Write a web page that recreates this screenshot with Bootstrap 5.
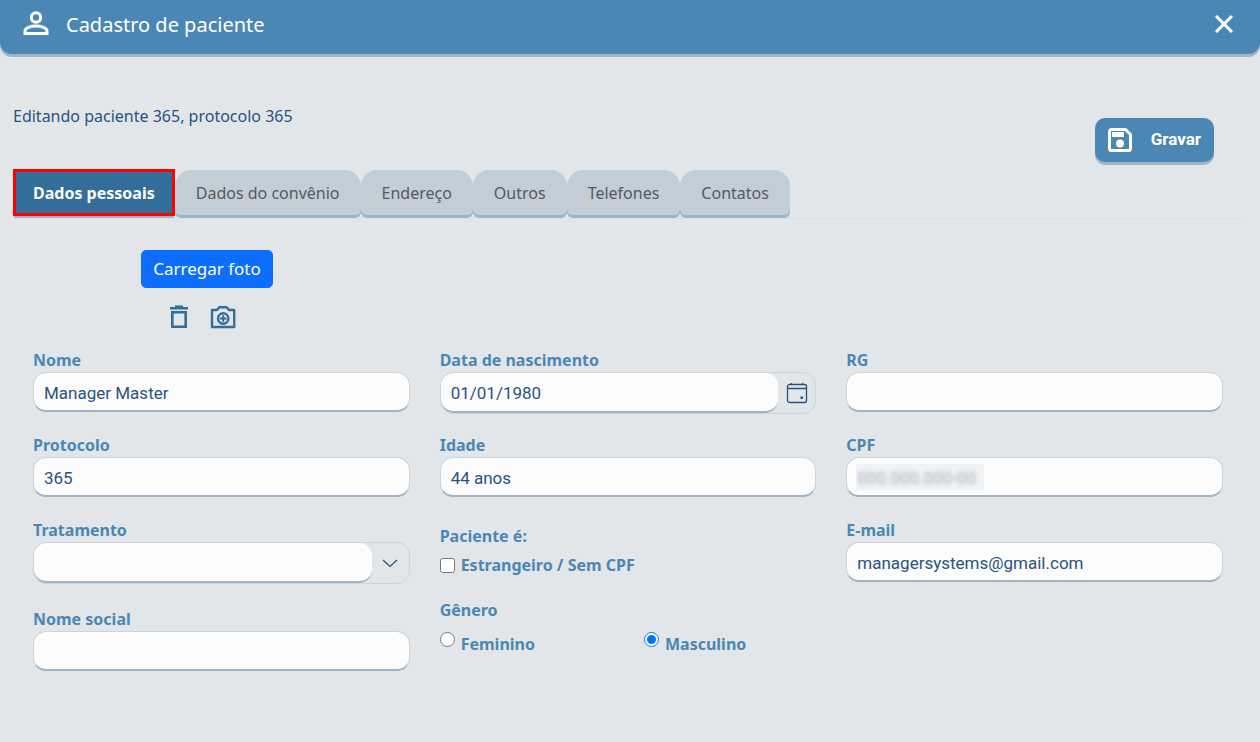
<!DOCTYPE html>
<html lang="pt-BR">
<head>
<meta charset="utf-8">
<meta name="viewport" content="width=device-width, initial-scale=1">
<title>Cadastro de paciente</title>
<link href="https://cdn.jsdelivr.net/npm/bootstrap@5.3.0/dist/css/bootstrap.min.css" rel="stylesheet">
<style>
  :root { --brand: #4a87b5; --brand-dark: #336d99; --edge: #9fb4c6; --surface: #e2e6e9; --ink: #285380; }
  body { background: var(--surface); color: var(--ink); font-family: "Noto Sans", sans-serif; font-size: 16px; }
  .topbar { background: var(--brand); color: #fff; height: 54px; padding: 0 24px 4px 22px; border-radius: 0 0 12px 12px; box-shadow: 0 3px 0 var(--edge); }
  .topbar h1 { font-size: 20px; font-weight: 400; line-height: 28px; }
  .plain-btn { background: none; border: 0; padding: 0; color: inherit; display: flex; }
  .intro { padding: 50px 46px 0 13px; }
  .save-btn { background: var(--brand); color: #fff; font-family: Roboto, sans-serif; font-weight: 700; font-size: 17px; height: 44px; border: 0; border-radius: 10px; padding: 0 13px 0 12px; gap: 18px; margin-top: 14px; box-shadow: 0 3px 0 var(--edge); }
  .tabs-row { margin: 8px 17px 0 14px; border-bottom: 1px solid #dcdfe4; padding-bottom: 3px; }
  .tabs-row .nav-link { height: 45px; padding: 0 21px; color: #555a5e; background: #c3cdd6; border: 0; border-radius: 16px 16px 6px 6px; box-shadow: 0 3px 0 var(--edge); }
  .tabs-row .nav-link.active { background: var(--brand-dark); color: #fff; font-weight: 700; padding: 0 19px; border-radius: 0; outline: 3px solid #f00; outline-offset: -2px; margin-right: 1px; }
  .form-area { padding: 31px 22px 24px 18px; }
  .photo-box { width: 378px; padding-bottom: 16px; color: var(--brand-dark); }
  .photo-box .btn { font-size: 17px; padding: 5px 11px; line-height: 26px; border-radius: 5px; --bs-btn-bg: #0d6efd; }
  .photo-tools { padding-right: 12px; }
  .form-area .row { --bs-gutter-x: 30px; margin: 0; }
  .field-label { color: var(--brand); font-weight: 700; line-height: 24px; display: block; margin: 0; }
  .tick + .field-label { padding-left: 6px; }
  .field { margin-bottom: 21px; }
  .field .form-control { height: 40px; background-color: #fcfcfc; border: 1px solid #ced4da; border-bottom: 2px solid var(--edge); border-radius: 13px; color: var(--ink); font-family: Roboto, sans-serif; font-size: 17px; padding: 2px 10px 0; }
  .field .combo { border: 1px solid #ced4da; border-radius: 13px; height: 42px; margin-bottom: -2px; }
  .field .combo .form-control { border-width: 0 0 2px; flex: 1; min-width: 0; }
  .combo .plain-btn { width: 37px; align-items: center; justify-content: center; }
  .field .masked { color: transparent; text-shadow: 0 0 4px #a3aebb; background-image: linear-gradient(#f0f2f5, #f0f2f5); background-size: 128px 26px; background-position: 9px 6px; background-repeat: no-repeat; box-shadow: none; }
  .tick { width: 15px; height: 15px; margin: 0; flex: none; }
  .choices { padding-top: 6px; }
  .choice-row { padding: 5px 0; }
  .choice-row-tall { padding-top: 10px; }
</style>
</head>
<body>
<header class="topbar d-flex align-items-center">
  <svg width="28" height="28" viewBox="0 0 28 28" fill="none" stroke="#fff" stroke-width="3" aria-hidden="true"><circle cx="14" cy="6.500" r="4.700"/><path d="M3 22.500v-2.500c0-3 5.600-5 11-5s11 2 11 5v2.500z"/></svg>
  <h1 class="mb-0 ms-3">Cadastro de paciente</h1>
  <button class="plain-btn ms-auto" type="button" aria-label="Fechar"><svg width="24" height="24" viewBox="0 0 24 24" fill="none" stroke="#fff" stroke-width="3"><path d="M4 3l16 16M20 3L4 19"/></svg></button>
</header>
<main>
  <div class="intro d-flex justify-content-between">
    <p class="mb-0 lh-base">Editando paciente 365, protocolo 365</p>
    <button class="save-btn d-flex align-items-center" type="button">
      <svg width="26" height="26" viewBox="0 0 26 26" aria-hidden="true"><path fill="none" stroke="#fff" stroke-width="3" stroke-linejoin="round" d="M4.500 2.500h14l5 5v14a2 2 0 0 1-2 2h-17a2 2 0 0 1-2-2v-17a2 2 0 0 1 2-2z"/><path fill="#fff" d="M5 5h12v5H5z"/><circle cx="13" cy="16.500" r="4" fill="#fff"/></svg>
      <span>Gravar</span>
    </button>
  </div>
  <nav class="tabs-row nav">
    <a class="nav-link active d-flex align-items-center" href="#dados" aria-current="page">Dados pessoais</a>
    <a class="nav-link d-flex align-items-center" href="#convenio">Dados do convênio</a>
    <a class="nav-link d-flex align-items-center" href="#endereco">Endereço</a>
    <a class="nav-link d-flex align-items-center" href="#outros">Outros</a>
    <a class="nav-link d-flex align-items-center" href="#telefones">Telefones</a>
    <a class="nav-link d-flex align-items-center" href="#contatos">Contatos</a>
  </nav>
  <form class="form-area" id="dados">
    <div class="photo-box d-flex flex-column align-items-center">
      <button class="btn btn-primary" type="button">Carregar foto</button>
      <div class="photo-tools d-flex gap-3 mt-3">
        <button class="plain-btn" type="button" aria-label="Excluir foto"><svg width="28" height="28" viewBox="0 0 28 28" fill="none" stroke="currentColor" stroke-width="2.600"><path d="M5 4.300h18M10 2.800h8" /><path d="M7.300 8.300h13.400v14.400H7.300z"/></svg></button>
        <button class="plain-btn" type="button" aria-label="Tirar foto"><svg width="28" height="28" viewBox="0 0 28 28" fill="none" stroke="currentColor" stroke-width="2.400" stroke-linejoin="round"><path d="M3 6h5l2.300-2.800h7.400L20 6h5.200v17H3z"/><circle cx="14.200" cy="14.500" r="5.200"/><path stroke-width="2" d="M14.200 11.200v6.600M10.900 14.500h6.600"/></svg></button>
      </div>
    </div>
    <div class="row">
      <div class="col-4">
        <div class="field"><label class="field-label" for="nome">Nome</label><input class="form-control" id="nome" value="Manager Master"></div>
        <div class="field"><label class="field-label" for="protocolo">Protocolo</label><input class="form-control" id="protocolo" value="365"></div>
        <div class="field pb-1"><label class="field-label" for="tratamento">Tratamento</label>
          <div class="combo d-flex"><input class="form-control" id="tratamento" role="combobox" aria-expanded="false"><button class="plain-btn" type="button" aria-label="Abrir lista"><svg width="16" height="16" viewBox="0 0 16 16" fill="none" stroke="#285380" stroke-width="1.200"><path d="M1 5l7 6.500L15 5"/></svg></button></div></div>
        <div class="field mb-0"><label class="field-label" for="social">Nome social</label><input class="form-control" id="social"></div>
      </div>
      <div class="col-4">
        <div class="field"><label class="field-label" for="nascimento">Data de nascimento</label>
          <div class="combo d-flex"><input class="form-control" id="nascimento" value="01/01/1980"><button class="plain-btn" type="button" aria-label="Abrir calendário"><svg width="22" height="22" viewBox="0 0 22 22" fill="none" stroke="#285380" stroke-width="1.300"><rect x="1.500" y="2.500" width="19" height="18" rx="2"/><path d="M1.500 6.500h19M5.500 1v2M16.500 1v2"/><path fill="#285380" stroke="none" d="M14.500 14.500h2.500v2.500h-2.500z"/></svg></button></div></div>
        <div class="field"><label class="field-label" for="idade">Idade</label><input class="form-control" id="idade" value="44 anos"></div>
        <fieldset class="choices mb-3">
          <legend class="field-label fs-6">Paciente é:</legend>
          <div class="choice-row d-flex align-items-center"><input class="tick" type="checkbox" id="estrangeiro"><label class="field-label" for="estrangeiro">Estrangeiro / Sem CPF</label></div>
        </fieldset>
        <fieldset>
          <legend class="field-label fs-6">Gênero</legend>
          <div class="choice-row-tall d-flex">
            <div class="d-flex w-50 me-3"><input class="tick" type="radio" name="genero" id="feminino"><label class="field-label" for="feminino">Feminino</label></div>
            <div class="d-flex"><input class="tick" type="radio" name="genero" id="masculino" checked><label class="field-label" for="masculino">Masculino</label></div>
          </div>
        </fieldset>
      </div>
      <div class="col-4">
        <div class="field"><label class="field-label" for="rg">RG</label><input class="form-control" id="rg"></div>
        <div class="field"><label class="field-label" for="cpf">CPF</label><input class="form-control masked" id="cpf" value="000.000.000-00"></div>
        <div class="field"><label class="field-label" for="email">E-mail</label><input class="form-control" type="email" id="email" value="managersystems@gmail.com"></div>
      </div>
    </div>
  </form>
</main>
<script src="https://cdn.jsdelivr.net/npm/bootstrap@5.3.0/dist/js/bootstrap.bundle.min.js"></script>
</body>
</html>
